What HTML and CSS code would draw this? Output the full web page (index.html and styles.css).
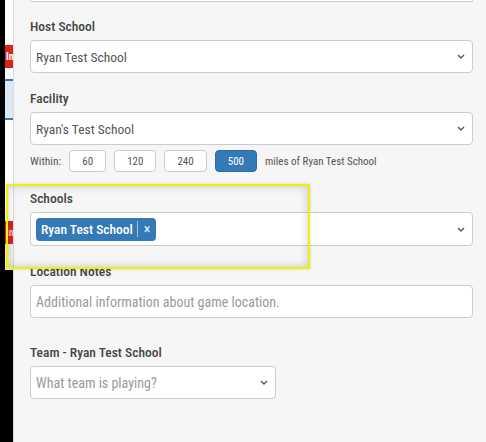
FILE: index.html
```html
<!DOCTYPE html>
<html>
<head>
<meta charset="utf-8">
<link rel="stylesheet" href="styles.css">
</head>
<body>
<div class="page">
  <aside class="strip">
    <div class="strip-col">
      <div class="s-gap s-gap-1"></div>
      <div class="s-red">In</div>
      <div class="s-gap s-gap-2"></div>
      <div class="s-blue"></div>
      <div class="s-gap s-gap-3"></div>
      <div class="s-red s-red-2">In</div>
      <div class="s-gap s-gap-4"></div>
      <div class="s-black"></div>
    </div>
  </aside>
  <main class="panel">
    <div class="prev-input"></div>

    <div class="group">
      <div class="label">Host School</div>
      <div class="select">
        <span class="value">Ryan Test School</span>
        <svg class="chev" width="8" height="5" viewBox="0 0 8 5"><path d="M1 1 L4 4 L7 1" fill="none" stroke="#555" stroke-width="1.4"/></svg>
      </div>
    </div>

    <div class="group group-tight">
      <div class="label">Facility</div>
      <div class="select">
        <span class="value">Ryan's Test School</span>
        <svg class="chev" width="8" height="5" viewBox="0 0 8 5"><path d="M1 1 L4 4 L7 1" fill="none" stroke="#555" stroke-width="1.4"/></svg>
      </div>
      <div class="within">
        <span class="within-label">Within:</span>
        <span class="mbtn">60</span>
        <span class="mbtn">120</span>
        <span class="mbtn">240</span>
        <span class="mbtn active">500</span>
        <span class="within-text">miles of Ryan Test School</span>
      </div>
    </div>

    <div class="group">
      <div class="label">Schools</div>
      <div class="select select-multi">
        <span class="tag"><span class="tag-text">Ryan Test School</span><span class="tag-sep"></span><span class="tag-x">×</span></span>
        <svg class="chev" width="8" height="5" viewBox="0 0 8 5"><path d="M1 1 L4 4 L7 1" fill="none" stroke="#555" stroke-width="1.4"/></svg>
      </div>
    </div>

    <div class="group group-notes">
      <div class="label">Location Notes</div>
      <div class="select">
        <span class="placeholder">Additional information about game location.</span>
      </div>
    </div>

    <div class="group">
      <div class="label">Team - Ryan Test School</div>
      <div class="select select-team">
        <span class="placeholder">What team is playing?</span>
        <svg class="chev" width="8" height="5" viewBox="0 0 8 5"><path d="M1 1 L4 4 L7 1" fill="none" stroke="#555" stroke-width="1.4"/></svg>
      </div>
    </div>
  </main>
</div>
<div class="highlight"></div>
</body>
</html>
```
FILE: styles.css
```css
html, body {
  margin: 0;
  padding: 0;
  height: 100%;
  overflow: hidden;
}
body {
  font-family: Roboto, "Liberation Sans", Arial, sans-serif;
  font-stretch: condensed;
  background: #f6f6f6;
  position: relative;
}
.page {
  display: flex;
  height: 442px;
}
.strip {
  width: 13px;
  flex: 0 0 13px;
  background: #000;
  display: flex;
  justify-content: flex-end;
}
.strip-col {
  width: 8px;
  display: flex;
  flex-direction: column;
  overflow: hidden;
}
.s-gap { background: #fff; }
.s-gap-1 { height: 45px; }
.s-gap-2 { height: 11px; }
.s-gap-3 { height: 101px; }
.s-gap-4 { height: 26px; background: #f3f1e2; }
.s-red {
  height: 23px;
  background: #d8261d;
  color: #fff;
  font-weight: bold;
  font-size: 10px;
  line-height: 23px;
  white-space: nowrap;
  padding-left: 1px;
}
.s-red-2 { color: #f3c6e0; }
.s-blue {
  height: 37px;
  background: #dbe9f6;
  border-top: 2px solid #3379b5;
  border-bottom: 2px solid #3379b5;
}
.s-black { flex: 1; background: #000; }

.panel {
  flex: 1;
  background: #f6f6f6;
  border-left: 1px solid #dcdcdc;
  padding: 0 13px 0 16px;
}
.prev-input {
  height: 1px;
  border: 1px solid #cfcfcf;
  border-top: none;
  border-radius: 0 0 4px 4px;
  background: #fff;
  margin-bottom: 15px;
}
.group { margin-bottom: 16px; }
.group-tight { margin-bottom: 17px; }
.group-notes { margin-bottom: 25px; }
.label {
  font-size: 13.5px;
  line-height: 18px;
  font-weight: 500;
  color: #444;
  margin-bottom: 5px;
}
.select {
  height: 33px;
  box-sizing: border-box;
  background: #fff;
  border: 1px solid #cccccc;
  border-radius: 4px;
  display: flex;
  align-items: center;
  padding: 0 7px 0 5px;
}
.value {
  flex: 1;
  font-size: 13.5px;
  color: #555;
}
.placeholder {
  flex: 1;
  font-size: 14px;
  color: #9a9a9a;
}
.chev { flex: 0 0 auto; display: block; }
.select-multi {
  height: 34px;
  padding-left: 5px;
}
.select-multi .tag { margin-right: auto; }
.select-team { width: 246px; }

.within {
  display: flex;
  align-items: center;
  gap: 8px;
  margin-top: 5px;
  height: 22px;
}
.within-label {
  font-size: 11.5px;
  color: #555;
}
.mbtn {
  height: 22px;
  box-sizing: border-box;
  border: 1px solid #cccccc;
  border-radius: 4px;
  background: #fff;
  font-size: 11px;
  color: #555;
  display: flex;
  align-items: center;
  justify-content: center;
  padding: 0 12px;
}
.mbtn.active {
  background: #337ab7;
  border-color: #2e6da4;
  color: #fff;
}
.within-text {
  font-size: 11px;
  color: #555;
}

.tag {
  height: 23px;
  background: #337ab7;
  border-radius: 4px;
  display: flex;
  align-items: center;
  color: #fff;
  padding: 0 6px 0 5px;
}
.tag-text {
  font-size: 13.5px;
  font-weight: 500;
}
.tag-sep {
  width: 1px;
  height: 16px;
  background: rgba(255,255,255,0.55);
  margin: 0 6px 0 4px;
}
.tag-x {
  font-size: 14px;
  line-height: 1;
  color: #e4eef7;
}

.highlight {
  position: absolute;
  left: 6px;
  top: 184px;
  width: 304px;
  height: 85px;
  box-sizing: border-box;
  border: 2px solid #f2ef00;
  box-shadow: inset 0 0 10px rgba(0,0,0,0.2), 0 0 3px rgba(0,0,0,0.15);
  pointer-events: none;
}
```
